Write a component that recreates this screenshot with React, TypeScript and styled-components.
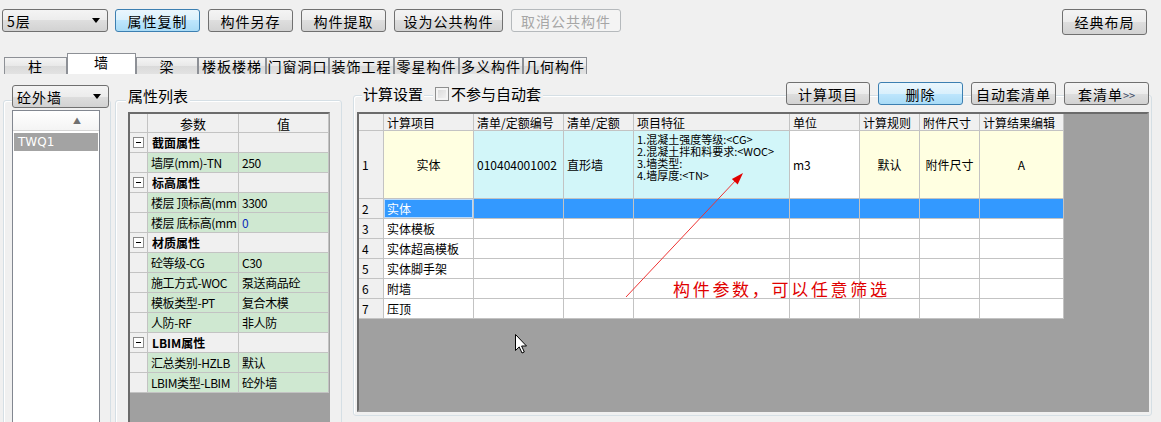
import React from "react";
import styled, { createGlobalStyle, css } from "styled-components";

const UI_FONT = `"Noto Sans CJK SC", "Liberation Sans", sans-serif`;

const GlobalStyle = createGlobalStyle`
  html, body { margin: 0; padding: 0; background: #f0f0f0; }
  body { font-family: ${UI_FONT}; }
  * { box-sizing: border-box; }
`;

const Screen = styled.div`
  position: relative;
  width: 1161px;
  height: 422px;
  overflow: hidden;
  background: #f0f0f0;
  font-family: ${UI_FONT};
  font-size: 12px;
  color: #000;
`;

/* ---------- toolbar ---------- */

const Toolbar = styled.div`
  display: flex;
  align-items: flex-start;
  gap: 8px;
  height: 35px;
  padding: 9px 14px 0 2px;
`;

const buttonFace = css`
  border: 1px solid #707070;
  border-radius: 3px;
  background: linear-gradient(#f4f4f4 0%, #ececec 50%, #dedede 50%, #d2d2d2 100%);
`;

const Button = styled.button<{ $w: number; $h?: number; $active?: boolean }>`
  ${buttonFace}
  width: ${p => p.$w}px;
  height: ${p => p.$h ?? 23}px;
  padding: 0;
  font-family: ${UI_FONT};
  font-size: 14px;
  letter-spacing: 1px;
  line-height: 1;
  color: #000;
  ${p =>
    p.$active &&
    css`
      border-color: #3c7fb1;
      background: linear-gradient(#eaf6fd 0%, #d9f0fc 50%, #bee6fd 50%, #a9dbf6 100%);
    `}
  &:disabled {
    border-color: #b5b9bc;
    background: #f4f4f4;
    color: #a6a6a6;
  }
`;

const Spacer = styled.div`
  flex: 1;
`;

const Small = styled.span`
  font-size: 11px;
  letter-spacing: 0;
  color: #3b4a66;
`;

const Dropdown = styled.div<{ $w: number }>`
  ${buttonFace}
  position: relative;
  display: flex;
  align-items: center;
  justify-content: space-between;
  flex-shrink: 0;
  width: ${p => p.$w}px;
  height: 23px;
  padding: 0 7px 0 4px;
  font-size: 14px;
  letter-spacing: 1px;
`;

const Caret = styled.span`
  width: 0;
  height: 0;
  border-left: 4px solid transparent;
  border-right: 4px solid transparent;
  border-top: 5px solid #000;
`;

/* ---------- tabs ---------- */

const TabBar = styled.div`
  display: flex;
  align-items: flex-end;
  height: 21px;
  margin-top: 18px;
  padding-left: 4px;
`;

const Tab = styled.div<{ $w: number; $active?: boolean }>`
  display: flex;
  align-items: center;
  justify-content: center;
  width: ${p => p.$w}px;
  height: ${p => (p.$active ? 21 : 17)}px;
  padding-bottom: ${p => (p.$active ? 3 : 0)}px;
  border: 1px solid #8d9096;
  border-bottom: none;
  background: ${p =>
    p.$active ? "#fff" : "linear-gradient(#f4f4f4, #e8e8e8 50%, #dadada 50%, #e2e2e2)"};
  font-size: 14px;
  line-height: 15px;
  letter-spacing: 1px;
  white-space: nowrap;
`;

/* ---------- body panes ---------- */

const Body = styled.div`
  display: flex;
  align-items: flex-start;
  margin-top: 11px;
  height: 337px;
`;

const Frame = styled.div`
  display: flex;
  flex-direction: column;
  align-items: flex-start;
  border: 1px solid #d5dfe5;
  border-radius: 3px;
  box-shadow: inset 1px 1px 0 #fff;
`;

const LeftFrame = styled(Frame)`
  width: 108px;
  height: 360px;
  margin: 15px 0 0 3px;
  padding-left: 8px;
  & > ${Dropdown} {
    margin-top: -16px;
  }
`;

const ListBox = styled.div`
  flex: 1;
  width: 88px;
  margin-top: 2px;
  border: 1px solid #828790;
  background: #fff;
`;

const ListHeader = styled.div`
  display: flex;
  align-items: center;
  justify-content: flex-end;
  height: 20px;
  padding-right: 18px;
  border-bottom: 1px solid #d5d5d5;
  background: linear-gradient(#ffffff, #f4f4f4);
  font-size: 8px;
  color: #707070;
`;

const ListItem = styled.div<{ $selected?: boolean }>`
  height: 18px;
  margin: 2px 1px 0;
  padding-left: 4px;
  background: ${p => (p.$selected ? "#a3a3a3" : "transparent")};
  color: ${p => (p.$selected ? "#fff" : "#000")};
  font-family: "DejaVu Sans", "Liberation Sans", sans-serif;
  font-size: 12px;
  line-height: 18px;
`;

const MiddleFrame = styled(Frame)`
  width: 227px;
  height: 360px;
  margin: 15px 0 0 4px;
  padding: 0 11px 0 12px;
`;

const GroupLabel = styled.div`
  margin: -13px 0 0 -2px;
  padding: 0 2px;
  background: #f0f0f0;
  font-size: 15px;
  line-height: 16px;
  white-space: nowrap;
`;

/* ---------- property grid ---------- */

const PropGrid = styled.div`
  display: grid;
  grid-template-columns: 18px 91px 90px;
  grid-template-rows: 19px;
  grid-auto-rows: 20px;
  align-content: start;
  flex: 1;
  width: 202px;
  margin-top: 8px;
  border: 2px solid;
  border-color: #6b6b6b #a0a0a0 #a0a0a0 #6b6b6b;
  background: #a0a0a0;
`;

const PropCell = styled.div<{ $kind: "head" | "section" | "data" | "gutter" }>`
  display: flex;
  align-items: center;
  justify-content: ${p => (p.$kind === "head" ? "center" : "flex-start")};
  padding-left: ${p => (p.$kind === "head" || p.$kind === "gutter" ? 0 : p.$kind === "data" ? 3 : 4)}px;
  border-right: 1px solid #c3c3c3;
  border-bottom: 1px solid #c3c3c3;
  background: ${p => (p.$kind === "data" ? "#cfe8d1" : "#f0f0f0")};
  font-size: ${p => (p.$kind === "head" ? 13 : 12)}px;
  font-weight: ${p => (p.$kind === "section" ? 700 : 400)};
  letter-spacing: ${p => (p.$kind === "data" ? -0.4 : 0)}px;
  white-space: nowrap;
  overflow: hidden;
`;

const Value = styled.span<{ $blue?: boolean }>`
  color: ${p => (p.$blue ? "#0a2bb8" : "#000")};
`;

const Collapse = styled.span`
  display: flex;
  align-items: center;
  justify-content: center;
  width: 11px;
  height: 11px;
  margin-left: 3px;
  border: 1px solid #8a8a8a;
  background: #fff;
  &::before {
    content: "";
    width: 5px;
    height: 1px;
    background: #000;
  }
`;

/* ---------- calc settings ---------- */

const RightFrame = styled(Frame)`
  width: 799px;
  height: 321px;
  margin: 10px 0 0 11px;
  padding: 0 2px 0 3px;
  align-items: stretch;
`;

const HeaderRow = styled.div`
  display: flex;
  align-items: center;
  gap: 8px;
  height: 23px;
  margin-top: -14px;
  padding: 0 0 0 5px;
`;

const LegendText = styled.span`
  padding: 0 1px;
  background: #f0f0f0;
  font-size: 15px;
  line-height: 16px;
  white-space: nowrap;
`;

const CheckGroup = styled.label`
  display: flex;
  align-items: center;
  gap: 2px;
  margin-left: 1px;
  padding: 0 2px;
  background: #f0f0f0;
  font-size: 15px;
  line-height: 16px;
  white-space: nowrap;
`;

const CheckBox = styled.span`
  width: 14px;
  height: 14px;
  border: 1px solid #8e8f8f;
  background: linear-gradient(135deg, #d6d6d6, #f6f6f6);
  box-shadow: inset 0 0 0 2px #f4f4f4;
`;

const CalcTable = styled.div`
  height: 300px;
  margin-top: 7px;
  border: 2px solid;
  border-color: #6b6b6b #a0a0a0 #a0a0a0 #6b6b6b;
  background: #a0a0a0;
`;

const CalcGrid = styled.div`
  display: grid;
  grid-template-columns: 25px 90px 90px 70px 156px 70px 60px 60px 84px;
  grid-template-rows: 17px 68px repeat(6, 20px);
  width: max-content;
`;

const CalcCell = styled.div<{ $bg?: string; $center?: boolean; $focus?: boolean }>`
  display: flex;
  align-items: center;
  justify-content: ${p => (p.$center ? "center" : "flex-start")};
  padding-left: ${p => (p.$center ? 0 : 3)}px;
  border-right: 1px solid #c3c3c3;
  border-bottom: 1px solid #c3c3c3;
  background: ${p => p.$bg ?? "#fff"};
  color: ${p => (p.$focus ? "#fff" : "#000")};
  font-size: 12px;
  white-space: nowrap;
  overflow: hidden;
  ${p =>
    p.$focus &&
    css`
      box-shadow: inset 0 0 0 1px #b9dafc;
    `}
`;

const Features = styled(CalcCell)`
  display: block;
  padding: 2px 0 0 3px;
  font-size: 11px;
  line-height: 12px;
`;

/* ---------- overlays ---------- */

const Note = styled.div`
  position: absolute;
  left: 673px;
  top: 279px;
  color: #e00000;
  font-size: 17px;
  letter-spacing: 2.7px;
  line-height: 20px;
  white-space: nowrap;
`;

const Overlay = styled.svg`
  position: absolute;
  left: 0;
  top: 0;
  pointer-events: none;
`;

const Pointer = styled.svg`
  position: absolute;
  left: 514px;
  top: 333px;
`;

/* ---------- data ---------- */

const tabs: [string, number, boolean?][] = [
  ["柱", 63],
  ["墙", 69, true],
  ["梁", 62],
  ["楼板楼梯", 68],
  ["门窗洞口", 63],
  ["装饰工程", 65],
  ["零星构件", 65],
  ["多义构件", 64],
  ["几何构件", 64]
];

type PropRow = { section: string } | { name: string; value: string; blue?: boolean };

const props: PropRow[] = [
  { section: "截面属性" },
  { name: "墙厚(mm)-TN", value: "250" },
  { section: "标高属性" },
  { name: "楼层 顶标高(mm", value: "3300" },
  { name: "楼层 底标高(mm", value: "0", blue: true },
  { section: "材质属性" },
  { name: "砼等级-CG", value: "C30" },
  { name: "施工方式-WOC", value: "泵送商品砼" },
  { name: "模板类型-PT", value: "复合木模" },
  { name: "人防-RF", value: "非人防" },
  { section: "LBIM属性" },
  { name: "汇总类别-HZLB", value: "默认" },
  { name: "LBIM类型-LBIM", value: "砼外墙" }
];

const calcHeads = ["计算项目", "清单/定额编号", "清单/定额", "项目特征", "单位", "计算规则", "附件尺寸", "计算结果编辑"];
const calcItems = ["实体", "实体模板", "实体超高模板", "实体脚手架", "附墙", "压顶"];
const features = ["1.混凝土强度等级:<CG>", "2.混凝土拌和料要求:<WOC>", "3.墙类型:", "4.墙厚度:<TN>"];

const YELLOW = "#ffffe1";
const CYAN = "#d2f6f9";
const GRAY = "#f0f0f0";
const BLUE = "#3399ff";

export default function App() {
  return (
    <Screen>
      <GlobalStyle />
      <Toolbar>
        <Dropdown $w={106} style={{ marginRight: -1 }}>
          <span>5层</span>
          <Caret />
        </Dropdown>
        <Button $w={85} $active>属性复制</Button>
        <Button $w={85}>构件另存</Button>
        <Button $w={85}>构件提取</Button>
        <Button $w={109}>设为公共构件</Button>
        <Button $w={110} disabled>取消公共构件</Button>
        <Spacer />
        <Button $w={85} $h={26}>经典布局</Button>
      </Toolbar>

      <TabBar>
        {tabs.map(([label, w, active]) => (
          <Tab key={label} $w={w} $active={active}>
            {label}
          </Tab>
        ))}
      </TabBar>

      <Body>
        <LeftFrame>
          <Dropdown $w={97}>
            <span>砼外墙</span>
            <Caret />
          </Dropdown>
          <ListBox>
            <ListHeader>▲</ListHeader>
            <ListItem $selected>TWQ1</ListItem>
          </ListBox>
        </LeftFrame>

        <MiddleFrame>
          <GroupLabel>属性列表</GroupLabel>
          <PropGrid>
            <PropCell $kind="gutter" />
            <PropCell $kind="head">参数</PropCell>
            <PropCell $kind="head">值</PropCell>
            {props.map((row, i) =>
              "section" in row ? (
                <React.Fragment key={i}>
                  <PropCell $kind="gutter">
                    <Collapse />
                  </PropCell>
                  <PropCell $kind="section">{row.section}</PropCell>
                  <PropCell $kind="gutter" />
                </React.Fragment>
              ) : (
                <React.Fragment key={i}>
                  <PropCell $kind="gutter" />
                  <PropCell $kind="data">{row.name}</PropCell>
                  <PropCell $kind="data">
                    <Value $blue={row.blue}>{row.value}</Value>
                  </PropCell>
                </React.Fragment>
              )
            )}
          </PropGrid>
        </MiddleFrame>

        <RightFrame>
          <HeaderRow>
            <LegendText>计算设置</LegendText>
            <CheckGroup>
              <CheckBox />
              不参与自动套
            </CheckGroup>
            <Spacer />
            <Button $w={84}>计算项目</Button>
            <Button $w={85} $active>删除</Button>
            <Button $w={85}>自动套清单</Button>
            <Button $w={85}>
              套清单<Small>&gt;&gt;</Small>
            </Button>
          </HeaderRow>
          <CalcTable>
            <CalcGrid>
              <CalcCell $bg={GRAY} />
              {calcHeads.map(h => (
                <CalcCell key={h} $bg={GRAY}>
                  {h}
                </CalcCell>
              ))}

              <CalcCell $bg={GRAY}>1</CalcCell>
              <CalcCell $bg={YELLOW} $center>实体</CalcCell>
              <CalcCell $bg={CYAN}>010404001002</CalcCell>
              <CalcCell $bg={CYAN}>直形墙</CalcCell>
              <Features $bg={CYAN}>
                {features.map(f => (
                  <div key={f}>{f}</div>
                ))}
              </Features>
              <CalcCell>m3</CalcCell>
              <CalcCell $bg={YELLOW} $center>默认</CalcCell>
              <CalcCell $bg={YELLOW} $center>附件尺寸</CalcCell>
              <CalcCell $bg={YELLOW} $center>A</CalcCell>

              {calcItems.map((item, i) => {
                const selected = i === 0;
                return (
                  <React.Fragment key={item}>
                    <CalcCell $bg={GRAY}>{i + 2}</CalcCell>
                    <CalcCell $bg={selected ? BLUE : undefined} $focus={selected}>
                      {item}
                    </CalcCell>
                    {Array.from({ length: 7 }).map((_, j) => (
                      <CalcCell key={j} $bg={selected ? BLUE : undefined} />
                    ))}
                  </React.Fragment>
                );
              })}
            </CalcGrid>
          </CalcTable>
        </RightFrame>
      </Body>

      <Overlay width="1161" height="422" viewBox="0 0 1161 422">
        <line x1="626" y1="297" x2="737" y2="179" stroke="#e33" strokeWidth="1" />
        <polygon points="743,173 737.7,184.4 731.9,179" fill="#e00000" />
      </Overlay>
      <Note>构件参数，可以任意筛选</Note>

      <Pointer width="14" height="22" viewBox="0 0 14 22">
        <path
          d="M1.5 1.5 L1.5 17.5 L5.2 13.9 L8 20 L10.3 19 L7.6 13 L12.5 13 Z"
          fill="#fff"
          stroke="#000"
          strokeWidth="1"
          strokeLinejoin="round"
        />
      </Pointer>
    </Screen>
  );
}
